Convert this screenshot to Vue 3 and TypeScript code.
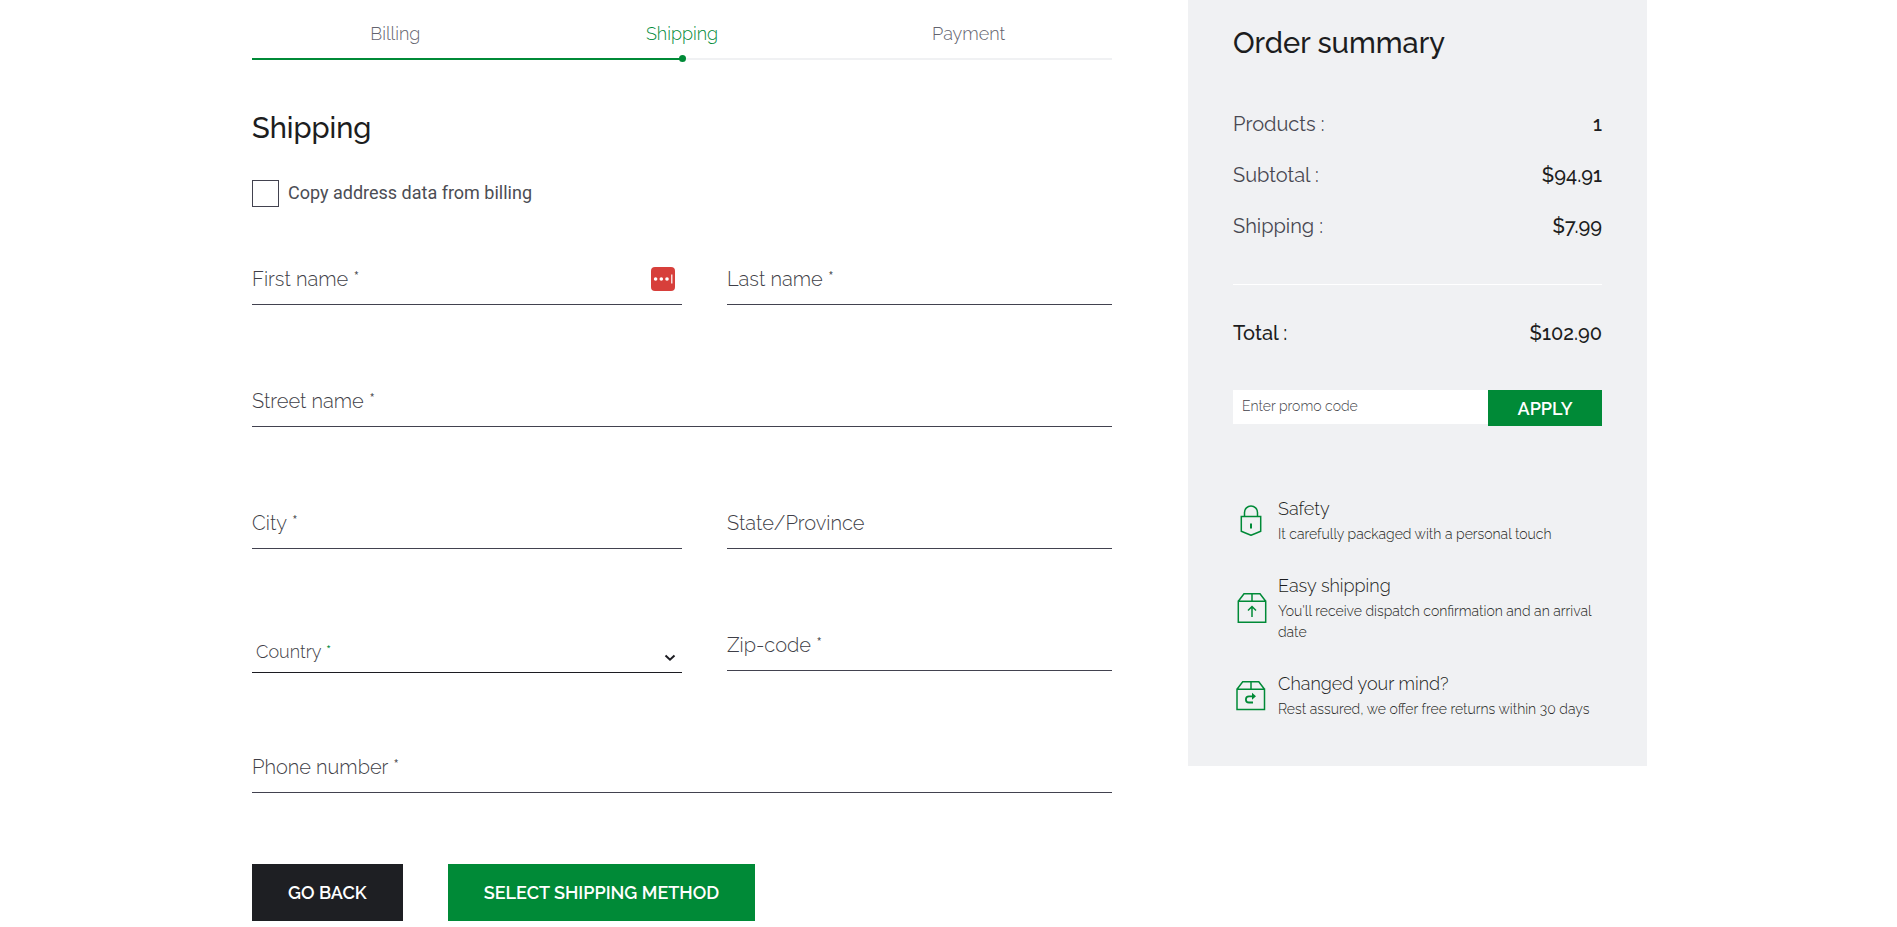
<script setup lang="ts">
import { reactive, ref } from 'vue'

interface Field {
  id: string
  label: string
  required: boolean
  wide?: boolean
  kind?: 'select'
}

interface Line {
  label: string
  value: string
}

const steps: string[] = ['Billing', 'Shipping', 'Payment']
const current = ref('Shipping')

const fields: Field[] = [
  { id: 'first', label: 'First name', required: true },
  { id: 'last', label: 'Last name', required: true },
  { id: 'street', label: 'Street name', required: true, wide: true },
  { id: 'city', label: 'City', required: true },
  { id: 'state', label: 'State/Province', required: false },
  { id: 'country', label: 'Country', required: true, kind: 'select' },
  { id: 'zip', label: 'Zip-code', required: true },
  { id: 'phone', label: 'Phone number', required: true, wide: true },
]

const values = reactive<Record<string, string>>({})
fields.forEach((f) => (values[f.id] = ''))

const copyBilling = ref(false)
const promo = ref('')

const lines: Line[] = [
  { label: 'Products :', value: '1' },
  { label: 'Subtotal :', value: '$94.91' },
  { label: 'Shipping :', value: '$7.99' },
]
</script>

<template>
  <div class="page">
    <main class="checkout">
      <ol class="steps">
        <li v-for="s in steps" :key="s" class="step" :class="{ active: s === current }">{{ s }}</li>
      </ol>
      <div class="track"><div class="done"><span class="dot"></span></div></div>

      <h1 class="title">Shipping</h1>

      <label class="copy">
        <input v-model="copyBilling" type="checkbox" class="box" />
        <span>Copy address data from billing</span>
      </label>

      <form @submit.prevent>
        <div class="fields">
          <div v-for="f in fields" :key="f.id" class="field" :class="{ wide: f.wide, choice: f.kind }">
            <template v-if="f.kind === 'select'">
              <select :id="f.id" v-model="values[f.id]" class="control">
                <option value=""></option>
              </select>
              <svg class="chevron" viewBox="0 0 12 8" aria-hidden="true">
                <path d="M1.5 1.5 L6 5.7 L10.5 1.5" fill="none" stroke="#1c1c22" stroke-width="2" />
              </svg>
            </template>
            <input v-else :id="f.id" v-model="values[f.id]" type="text" class="control" />
            <label v-show="!values[f.id]" :for="f.id" class="caption">{{ f.label }}<span v-if="f.required" class="star"> *</span></label>
            <svg v-if="f.id === 'first'" class="vault" viewBox="0 0 24 24" aria-hidden="true">
              <rect width="24" height="24" rx="4" fill="#d73f3b" />
              <circle cx="4.6" cy="12" r="1.8" fill="#fff" />
              <circle cx="10.3" cy="12" r="1.8" fill="#fff" />
              <circle cx="16" cy="12" r="1.8" fill="#fff" />
              <rect x="20.2" y="7.5" width="1.2" height="9" fill="#fff" />
            </svg>
          </div>
        </div>
        <div class="actions">
          <button type="button" class="btn dark">GO BACK</button>
          <button type="submit" class="btn green">SELECT SHIPPING METHOD</button>
        </div>
      </form>
    </main>

    <aside class="summary">
      <h2 class="title">Order summary</h2>
      <dl class="lines">
        <div v-for="l in lines" :key="l.label" class="line">
          <dt>{{ l.label }}</dt>
          <dd>{{ l.value }}</dd>
        </div>
      </dl>
      <dl class="total">
        <div class="line">
          <dt>Total :</dt>
          <dd>$102.90</dd>
        </div>
      </dl>

      <form class="promo" @submit.prevent>
        <input v-model="promo" type="text" class="code" placeholder="Enter promo code" aria-label="Enter promo code" />
        <button type="submit" class="apply">APPLY</button>
      </form>

      <ul class="perks">
        <li class="perk">
          <svg class="icon" viewBox="0 1 36 36" aria-hidden="true">
            <g fill="none" stroke="#008a37" stroke-width="1.5">
              <path d="M8.3 14.5 H27.7 V29.3 Q23 31.3 18 33.2 Q13 31.3 8.3 29.3 Z" />
              <path d="M11.5 14.5 V10.5 A6.5 6.5 0 0 1 24.5 10.5 V14.5" />
              <path d="M18 21.5 V26.5" stroke-width="2" />
            </g>
          </svg>
          <div>
            <h3>Safety</h3>
            <p>It carefully packaged with a personal touch</p>
          </div>
        </li>
        <li class="perk">
          <svg class="icon" viewBox="0 1 36 36" aria-hidden="true">
            <g fill="none" stroke="#008a37" stroke-width="1.5">
              <path d="M5.3 12.3 H32.7 V33.2 H5.3 Z M5.3 12.3 L11 4.8 H27 L32.7 12.3 M19 4.8 V12.3" />
              <path d="M19 28 V17.5 M15 21.5 L19 17.5 L23 21.5" />
            </g>
          </svg>
          <div>
            <h3>Easy shipping</h3>
            <p>You'll receive dispatch confirmation and an arrival date</p>
          </div>
        </li>
        <li class="perk">
          <svg class="icon" viewBox="0 1 36 36" aria-hidden="true">
            <g fill="none" stroke="#008a37" stroke-width="1.5">
              <path d="M4 12.3 H31.5 V32.5 H4 Z M4 12.3 L9.7 4.8 H25.8 L31.5 12.3 M18 4.8 V12.3" />
              <path d="M20 25.5 H16 A3.1 3.1 0 0 1 16 19.3 H20" stroke-width="1.8" />
            </g>
            <path d="M19 15.8 L23 19.3 L19 22.8 Z" fill="#008a37" />
          </svg>
          <div>
            <h3>Changed your mind?</h3>
            <p>Rest assured, we offer free returns within 30 days</p>
          </div>
        </li>
      </ul>
    </aside>
  </div>
</template>

<style>
body {
  background: #fff;
}
</style>

<style scoped>
.page {
  display: grid;
  grid-template-columns: 860fr 459fr;
  column-gap: 76px;
  align-items: start;
  padding: 0 250px 0 252px;
  font-family: "Raleway", "Lato", sans-serif;
  font-weight: 300;
  color: #1c1d20;
}
h1, h2, h3, p, ol, ul, dl, dd {
  margin: 0;
  padding: 0;
}
ol, ul {
  list-style: none;
}
input, select, button {
  font-family: inherit;
  border-radius: 0;
  margin: 0;
  box-sizing: border-box;
}
.steps {
  display: grid;
  grid-template-columns: repeat(3, 1fr);
  padding-top: 22px;
}
.step {
  text-align: center;
  font-size: 18px;
  line-height: 24px;
  color: #63636e;
}
.step.active {
  color: #008a37;
}
.track {
  margin-top: 12px;
  height: 2px;
  background: #f0f1f3;
}
.done {
  position: relative;
  width: 50%;
  height: 2px;
  background: #008a37;
}
.dot {
  position: absolute;
  right: -4px;
  top: -3px;
  width: 7px;
  height: 7px;
  border-radius: 50%;
  background: #008a37;
}
.title {
  font-size: 29px;
  line-height: 34px;
  font-weight: 500;
}
.checkout .title {
  margin-top: 51px;
}
.copy {
  display: flex;
  align-items: flex-start;
  gap: 9px;
  width: fit-content;
  margin-top: 35px;
  font-family: "Roboto", sans-serif;
  font-weight: 400;
  font-size: 18px;
  line-height: 25px;
  color: #4c4d54;
}
.box {
  appearance: none;
  width: 27px;
  height: 27px;
  border: 1px solid #42424f;
  background: #fff;
}
.box:checked {
  background: #008a37;
}
.fields {
  display: grid;
  grid-template-columns: 430fr 385fr;
  column-gap: 45px;
  grid-auto-rows: 46px;
  row-gap: 76px;
  align-items: start;
  margin-top: 52px;
}
.field {
  position: relative;
}
.wide {
  grid-column: span 2;
}
.control {
  display: block;
  appearance: none;
  width: 100%;
  height: 46px;
  padding: 8px 0 0;
  border: 0;
  border-bottom: 1px solid #42424f;
  background: transparent;
  font-size: 20px;
  outline: none;
}
.caption {
  position: absolute;
  left: 0;
  top: 8px;
  font-size: 20px;
  line-height: 24px;
  color: #3f3f48;
  pointer-events: none;
}
.choice .control {
  height: 48px;
  border-bottom-color: #1c1c22;
}
.choice .caption {
  left: 4px;
  top: 15px;
  font-size: 18px;
}
.choice .star {
  color: #008a37;
}
.chevron {
  position: absolute;
  right: 6px;
  top: 29px;
  width: 12px;
  height: 8px;
}
.vault {
  position: absolute;
  right: 7px;
  top: 8px;
  width: 24px;
  height: 24px;
}
.actions {
  display: flex;
  gap: 45px;
  margin-top: 71px;
}
.btn {
  height: 57px;
  padding: 0 36px;
  border: 0;
  font-size: 18px;
  font-weight: 600;
  color: #fff;
  cursor: pointer;
}
.dark {
  background: #1e1f23;
}
.green, .apply {
  background: #008a37;
}
.summary {
  padding: 26px 45px 46px;
  background: #f0f1f3;
}
.lines {
  display: grid;
  row-gap: 26px;
  margin-top: 52px;
  padding-bottom: 45px;
  border-bottom: 1px solid #fff;
}
.line {
  display: flex;
  justify-content: space-between;
  font-size: 20px;
  line-height: 25px;
}
dt {
  font-weight: 400;
  color: #484852;
}
dd, .total dt {
  font-weight: 500;
  color: #1c1d20;
}
.total {
  margin-top: 36px;
}
.promo {
  display: flex;
  align-items: flex-start;
  margin-top: 44px;
}
.code {
  flex: 1;
  min-width: 0;
  height: 34px;
  padding: 0 9px 2px;
  border: 0;
  background: #fff;
  font-size: 14px;
  font-weight: 300;
  outline: none;
}
.code::placeholder {
  color: #3f3f48;
  opacity: 1;
}
.apply {
  width: 114px;
  height: 36px;
  padding: 0;
  border: 0;
  font-size: 18px;
  font-weight: 600;
  color: #fff;
  cursor: pointer;
}
.perks {
  display: grid;
  row-gap: 28px;
  margin-top: 70px;
}
.perk {
  display: flex;
  align-items: center;
  gap: 9px;
}
.icon {
  flex: none;
  width: 36px;
  height: 36px;
}
h3 {
  margin-bottom: 2px;
  font-size: 18px;
  line-height: 26px;
  font-weight: 300;
}
p {
  font-size: 14px;
  line-height: 21px;
}
</style>
